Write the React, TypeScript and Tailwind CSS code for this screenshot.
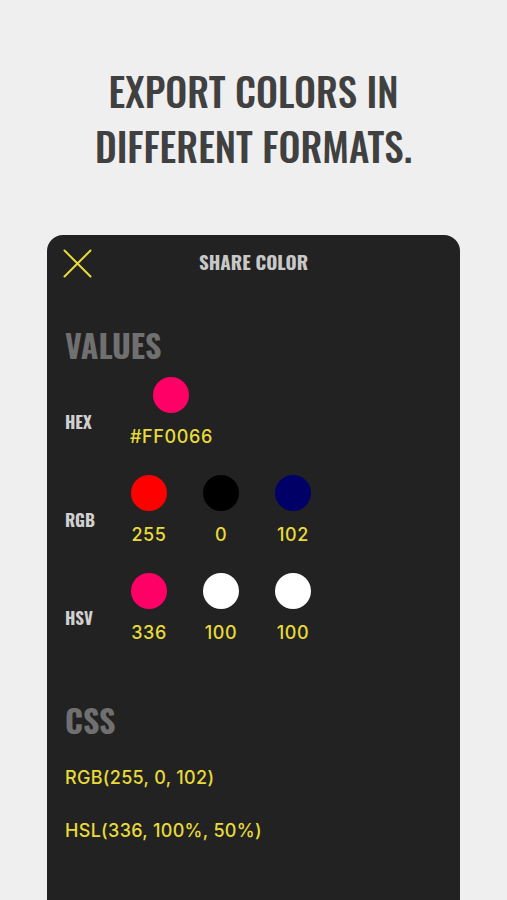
const heading = "font-['Oswald','Liberation_Sans_Narrow','DejaVu_Sans_Condensed',sans-serif]";
const body = "font-['Inter','Lato',sans-serif]";

const rows = [
  { label: "HEX", items: [{ color: "#ff0066", value: "#FF0066" }] },
  {
    label: "RGB",
    items: [
      { color: "#ff0000", value: "255" },
      { color: "#000000", value: "0" },
      { color: "#000066", value: "102" },
    ],
  },
  {
    label: "HSV",
    items: [
      { color: "#ff0066", value: "336" },
      { color: "#ffffff", value: "100" },
      { color: "#ffffff", value: "100" },
    ],
  },
];

function CloseIcon() {
  return (
    <svg
      className="absolute left-[16px] top-[14px] h-[29px] w-[29px]"
      viewBox="0 0 29 29"
      fill="none"
      stroke="#e8db3a"
      strokeWidth={2}
      strokeLinecap="round"
    >
      <path d="M1.5 1.5 27.5 27.5M27.5 1.5 1.5 27.5" />
    </svg>
  );
}

export default function App() {
  return (
    <div className="h-[900px] w-[507px] overflow-hidden bg-[#efefef]">
      <h1
        className={`${heading} pt-[63px] text-center text-[39px] font-medium leading-[55px] text-[#404040]`}
      >
        EXPORT COLORS IN
        <br />
        DIFFERENT FORMATS.
      </h1>

      <section className="mx-[47px] mt-[62px] h-[700px] rounded-t-[16px] bg-[#222222]">
        <header className="relative flex h-[56px] items-center justify-center pb-[4px]">
          <CloseIcon />
          <span className={`${heading} text-[19px] font-bold text-[#c8c8c8]`}>SHARE COLOR</span>
        </header>

        <div className="px-[18px]">
          <h2 className={`${heading} mt-[38px] text-[32px] font-bold leading-none text-[#707070]`}>
            VALUES
          </h2>

          <div className="mt-[16px] flex flex-col gap-[27px]">
            {rows.map((row) => (
              <div key={row.label} className="flex items-end">
                <div
                  className={`${heading} mb-[14px] w-[65px] text-[17px] font-bold text-[#d0d0d0]`}
                >
                  {row.label}
                </div>
                <div className="flex gap-[34px]">
                  {row.items.map((item, i) => (
                    <div key={i} className="flex min-w-[38px] flex-col items-center">
                      <div
                        className="h-[36px] w-[36px] rounded-full"
                        style={{ backgroundColor: item.color }}
                      />
                      <div
                        className={`${body} mt-[13px] text-[18px] font-medium leading-[22px] tracking-[0.6px] text-[#e8db3a]`}
                      >
                        {item.value}
                      </div>
                    </div>
                  ))}
                </div>
              </div>
            ))}
          </div>

          <h2 className={`${heading} mt-[60px] text-[32px] font-bold leading-none text-[#707070]`}>
            CSS
          </h2>
          <p
            className={`${body} mt-[28px] text-[18px] font-medium tracking-[0.3px] text-[#e8db3a]`}
          >
            RGB(255, 0, 102)
          </p>
          <p
            className={`${body} mt-[26px] text-[18px] font-medium tracking-[0.3px] text-[#e8db3a]`}
          >
            HSL(336, 100%, 50%)
          </p>
        </div>
      </section>
    </div>
  );
}
